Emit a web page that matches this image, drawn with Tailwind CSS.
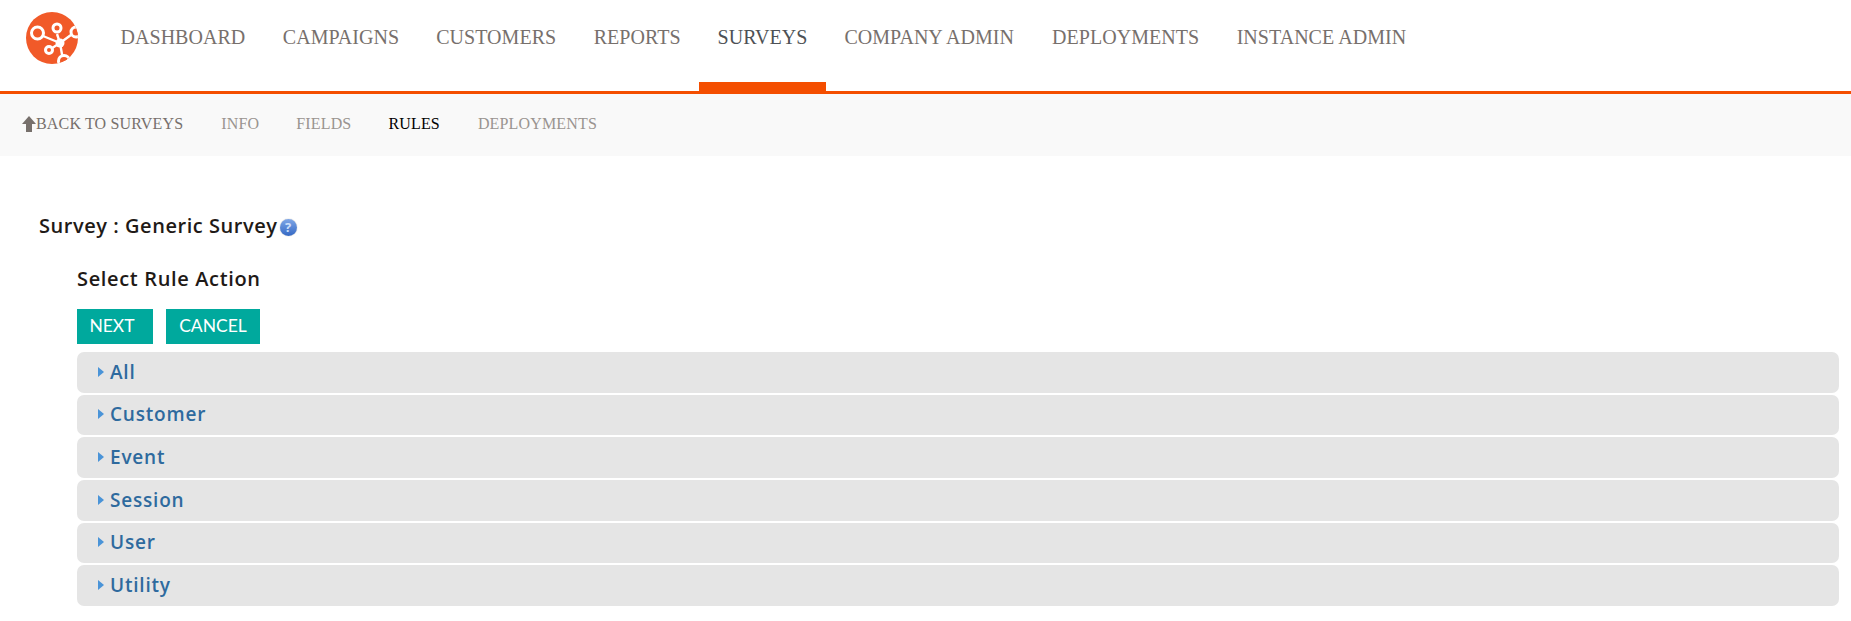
<!DOCTYPE html>
<html lang="en">
<head>
  <meta charset="UTF-8">
  <title>Survey Rules</title>
  <script src="https://cdn.jsdelivr.net/npm/@tailwindcss/browser@4"></script>
</head>
<body class="bg-white font-['Liberation_Serif',serif]">
  <!-- Main nav -->
  <header class="flex h-[94px] border-b-[3px] border-[#f44e00]">
    <a href="#" class="ml-[26px] mt-3 w-[52px] h-[52px] shrink-0">
      <svg viewBox="0 0 52 52" class="w-[52px] h-[52px]">
        <defs><clipPath id="logoClip"><circle cx="26" cy="26" r="26"/></clipPath></defs>
        <circle cx="26" cy="26" r="26" fill="#f15a29"/>
        <g clip-path="url(#logoClip)" fill="none" stroke="#fff">
          <path stroke-width="2.4" d="M34 31 L17 24 M34 31 L31 22 M34 31 L23 38 M34 31 L49 20 M34 31 L37 48"/>
          <circle cx="11.5" cy="21" r="6" stroke-width="3" fill="#f15a29"/>
          <circle cx="31" cy="16" r="4" stroke-width="3" fill="#f15a29"/>
          <circle cx="23" cy="38" r="3.5" stroke-width="3" fill="#f15a29"/>
          <circle cx="50" cy="20" r="5" stroke-width="3" fill="#f15a29"/>
          <circle cx="38" cy="49" r="5.5" stroke-width="3" fill="#f15a29"/>
          <circle cx="34" cy="31" r="4.5" fill="#fff" stroke="none"/>
        </g>
      </svg>
    </a>
    <nav class="ml-[23px] flex text-[20px] leading-none tracking-[0.04px] text-[#77706c]">
      <a href="#" class="pl-[19.5px] pr-[18.5px] pt-[27px]">DASHBOARD</a>
      <a href="#" class="pl-[19px] pr-[18.5px] pt-[27px]">CAMPAIGNS</a>
      <a href="#" class="pl-[18.5px] pr-[19px] pt-[27px]">CUSTOMERS</a>
      <a href="#" class="pl-[18.5px] pr-[18px] pt-[27px]">REPORTS</a>
      <a href="#" class="h-[91px] pl-[19px] pr-[18.5px] pt-[27px] border-b-[9px] border-[#f44e00] text-[#4d5155]">SURVEYS</a>
      <a href="#" class="pl-[18.5px] pr-[19.5px] pt-[27px]">COMPANY ADMIN</a>
      <a href="#" class="pl-[18.5px] pr-[19px] pt-[27px]">DEPLOYMENTS</a>
      <a href="#" class="pl-[18.5px] pr-[19px] pt-[27px]">INSTANCE ADMIN</a>
    </nav>
  </header>

  <!-- Survey sub nav -->
  <nav class="flex items-start h-[62px] bg-[#f9f9f9] pl-[22px] pt-[22px] text-[16px] leading-none tracking-[0.16px] text-[#9a9490]">
    <a href="#" class="flex items-center text-[#77706c] mr-[38px]">
      <svg viewBox="0 0 14 16" class="w-[14px] h-[16px] -mt-[1px]"><path fill="#77706c" d="M7 0 L14 8 H10 V16 H4 V8 H0 Z"/></svg>BACK TO SURVEYS
    </a>
    <a href="#" class="mr-[37px]">INFO</a>
    <a href="#" class="mr-[37px]">FIELDS</a>
    <a href="#" class="mr-[38px] text-black">RULES</a>
    <a href="#">DEPLOYMENTS</a>
  </nav>

  <main class="font-['Open_Sans',sans-serif]">
    <h1 class="flex items-center ml-[39px] mt-[58px] h-[24px] text-[20px] leading-none font-semibold tracking-[0.55px] text-[#1f1a17]">
      Survey : Generic Survey
      <span class="flex items-center justify-center w-[17px] h-[17px] mt-[3px] ml-[2px] rounded-full bg-gradient-to-b from-[#7fa6e6] to-[#3468c4] text-[13px] font-bold tracking-normal text-[#cfe0fa] shadow-[0_0_1px_#888]">?</span>
    </h1>

    <div class="ml-[77px] mr-3">
      <h2 class="mt-[29px] h-[24px] text-[20px] leading-[24px] font-semibold tracking-[0.65px] text-[#1f1a17]">Select Rule Action</h2>

      <div class="flex gap-[13px] mt-[18px] mb-[8px] font-['Lato',sans-serif] text-[17.5px] text-white">
        <button class="flex items-center justify-center w-[76px] h-[35px] pr-[6px] bg-[#00a99d]">NEXT</button>
        <button class="flex items-center justify-center w-[94px] h-[35px] bg-[#00a99d]">CANCEL</button>
      </div>

      <div class="flex flex-col gap-[2px] text-[19px] font-semibold tracking-[0.8px] text-[#2e6a9e]">
        <div class="flex items-center h-[40.67px] pl-[21px] pb-[1px] rounded-[7px] bg-[#e5e5e5]">
          <span class="w-0 h-0 mr-[6px] border-y-[5px] border-l-[6px] border-y-transparent border-l-[#4a94d8]"></span>All
        </div>
        <div class="flex items-center h-[40.67px] pl-[21px] pb-[1px] rounded-[7px] bg-[#e5e5e5]">
          <span class="w-0 h-0 mr-[6px] border-y-[5px] border-l-[6px] border-y-transparent border-l-[#4a94d8]"></span>Customer
        </div>
        <div class="flex items-center h-[40.67px] pl-[21px] pb-[1px] rounded-[7px] bg-[#e5e5e5]">
          <span class="w-0 h-0 mr-[6px] border-y-[5px] border-l-[6px] border-y-transparent border-l-[#4a94d8]"></span>Event
        </div>
        <div class="flex items-center h-[40.67px] pl-[21px] pb-[1px] rounded-[7px] bg-[#e5e5e5]">
          <span class="w-0 h-0 mr-[6px] border-y-[5px] border-l-[6px] border-y-transparent border-l-[#4a94d8]"></span>Session
        </div>
        <div class="flex items-center h-[40.67px] pl-[21px] pb-[1px] rounded-[7px] bg-[#e5e5e5]">
          <span class="w-0 h-0 mr-[6px] border-y-[5px] border-l-[6px] border-y-transparent border-l-[#4a94d8]"></span>User
        </div>
        <div class="flex items-center h-[40.67px] pl-[21px] pb-[1px] rounded-[7px] bg-[#e5e5e5]">
          <span class="w-0 h-0 mr-[6px] border-y-[5px] border-l-[6px] border-y-transparent border-l-[#4a94d8]"></span>Utility
        </div>
      </div>
    </div>
  </main>
</body>
</html>
